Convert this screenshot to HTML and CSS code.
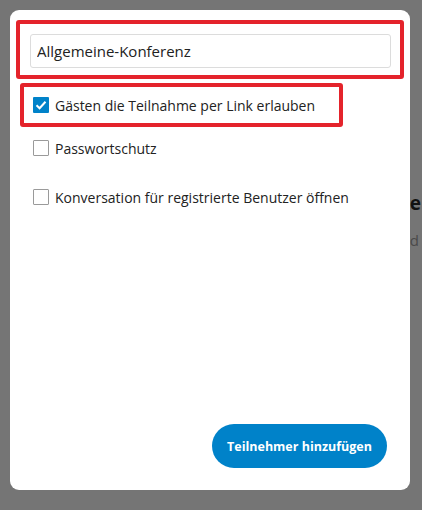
FILE: index.html
```html
<!DOCTYPE html>
<html lang="de">
<head>
  <meta charset="UTF-8">
  <title>Konversation erstellen</title>
  <link rel="stylesheet" href="styles.css">
</head>
<body>
  <div class="page">
    <h2 class="page-title">Runde</h2>
    <p class="page-text">wird</p>
  </div>

  <div class="overlay">
    <div class="modal">
      <div class="mark mark-name">
        <input class="name" type="text" value="Allgemeine-Konferenz">
      </div>

      <div class="mark mark-guests">
        <label class="check">
          <span class="box checked">
            <svg width="12" height="10" viewBox="0 0 12 10"><path d="M1.5 5.2 4.6 8.2 10.5 1.8" fill="none" stroke="#fff" stroke-width="2"/></svg>
          </span>
          Gästen die Teilnahme per Link erlauben
        </label>
      </div>

      <label class="check option">
        <span class="box"></span>
        Passwortschutz
      </label>

      <label class="check option option-last">
        <span class="box"></span>
        Konversation für registrierte Benutzer öffnen
      </label>

      <div class="actions">
        <button class="primary">Teilnehmer hinzufügen</button>
      </div>
    </div>
  </div>
</body>
</html>
```

FILE: styles.css
```css
body {
  margin: 0;
  font-family: "Open Sans", sans-serif;
  background-color: #757575;
  overflow: hidden;
}
.page {
  padding: 190px 1px 0 0;
  text-align: right;
  white-space: nowrap;
}
.page-title {
  margin: 0;
  font-size: 19px;
  color: #111;
}
.page-text {
  margin: 14px 2px 0 0;
  font-size: 15px;
  color: #4a4a4a;
}
.overlay {
  position: absolute;
  top: 0;
  left: 0;
  right: 0;
  bottom: 0;
}
.modal {
  margin: 10px 0 0 10px;
  width: 400px;
  height: 480px;
  background: #fff;
  border-radius: 9px;
  display: flex;
  flex-direction: column;
  box-sizing: border-box;
}
.mark {
  border: 4px solid #e4232b;
  border-radius: 3px;
  box-sizing: border-box;
}
.mark-name {
  margin: 10px 6px 0 6px;
  height: 59px;
  padding: 10px 9px 0 10px;
}
.name {
  display: block;
  width: 100%;
  height: 34px;
  box-sizing: border-box;
  border: 1px solid #dcdcdc;
  border-radius: 3px;
  padding: 0 6px;
  font-family: inherit;
  font-size: 15px;
  color: #222;
}
.mark-guests {
  margin: 4px 0 0 10px;
  width: 323px;
  height: 44px;
  padding: 0 0 0 9px;
  display: flex;
  align-items: center;
}
.check {
  display: flex;
  align-items: center;
  gap: 6px;
  font-size: 14px;
  color: #222;
}
.box {
  width: 14px;
  height: 14px;
  border: 1px solid #9a9a9a;
  border-radius: 1px;
  display: flex;
  align-items: center;
  justify-content: center;
}
.box.checked {
  width: 16px;
  height: 16px;
  border: none;
  background: #0082c9;
}
.option {
  margin: 12px 0 0 23px;
  height: 18px;
}
.option-last {
  margin-top: 31px;
}
.actions {
  margin-top: auto;
  display: flex;
  justify-content: flex-end;
  padding: 0 23px 22px 0;
}
.primary {
  width: 175px;
  height: 44px;
  border: none;
  border-radius: 22px;
  background-color: #0082c9;
  color: #fff;
  font-family: inherit;
  font-size: 12.5px;
  font-weight: bold;
  cursor: pointer;
}
```
